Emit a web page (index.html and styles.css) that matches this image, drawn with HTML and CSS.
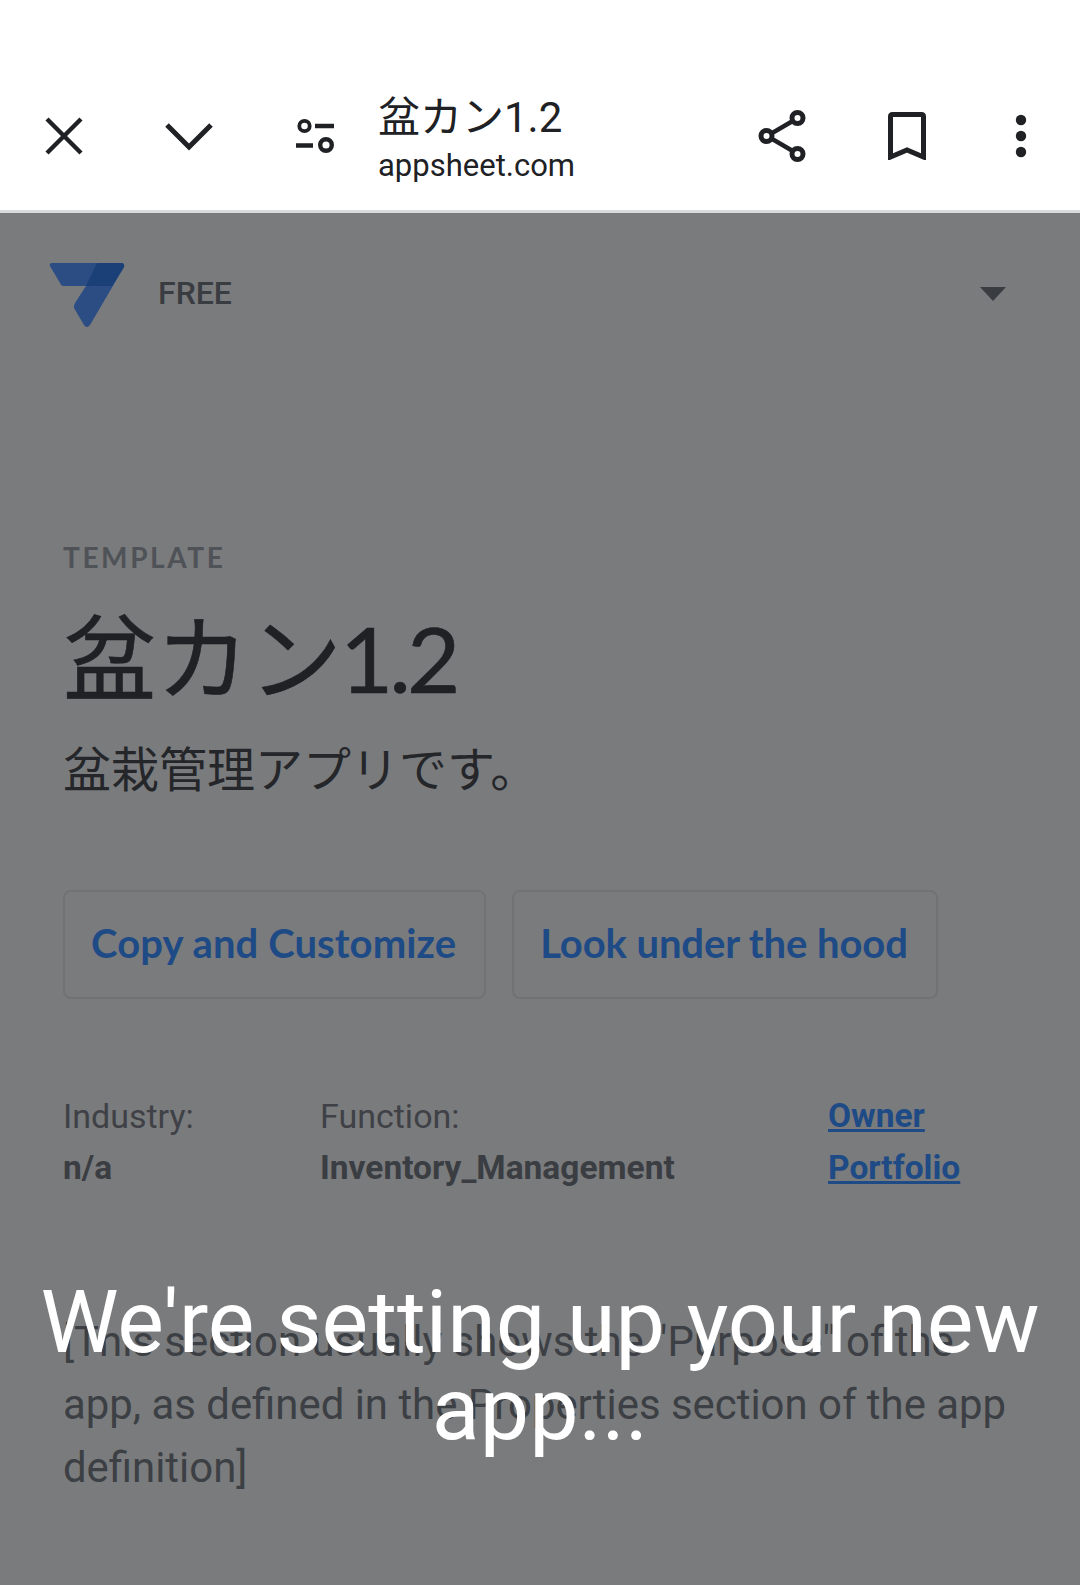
FILE: index.html
```html
<!DOCTYPE html>
<html lang="en">
<head>
  <meta charset="UTF-8">
  <meta name="viewport" content="width=device-width, initial-scale=1.0">
  <title>盆カン1.2</title>
  <link rel="stylesheet" href="styles.css">
</head>
<body>
  <header class="toolbar">
    <button class="tool tool-close" aria-label="Close">
      <svg width="40" height="40" viewBox="0 0 40 40"><path d="M3 3 L37 37 M37 3 L3 37" fill="none" stroke="#202124" stroke-width="4.4"/></svg>
    </button>
    <button class="tool tool-min" aria-label="Minimize">
      <svg width="48" height="32" viewBox="0 0 48 32"><path d="M2 5 L24 27 L46 5" fill="none" stroke="#202124" stroke-width="5"/></svg>
    </button>
    <button class="tool tool-site" aria-label="Site settings">
      <svg width="40" height="36" viewBox="0 0 40 36"><circle cx="9.500" cy="8" r="5.200" fill="none" stroke="#202124" stroke-width="3.800"/><path d="M20 8 H39 M1 27.500 H18" fill="none" stroke="#202124" stroke-width="4.400"/><circle cx="31" cy="27" r="5.800" fill="none" stroke="#202124" stroke-width="4.400"/></svg>
    </button>
    <div class="address">
      <div class="address-title">盆カン1.2</div>
      <div class="address-url">appsheet.com</div>
    </div>
    <button class="tool tool-share" aria-label="Share">
      <svg width="48" height="54" viewBox="0 0 48 54"><path d="M39 9.500 L9 27 L39 44.500" fill="none" stroke="#202124" stroke-width="4.400"/><circle cx="39.500" cy="9" r="5.500" fill="#fff" stroke="#202124" stroke-width="5"/><circle cx="8.500" cy="27" r="5.500" fill="#fff" stroke="#202124" stroke-width="5"/><circle cx="39.500" cy="45" r="5.500" fill="#fff" stroke="#202124" stroke-width="5"/></svg>
    </button>
    <button class="tool tool-bookmark" aria-label="Bookmark">
      <svg width="38" height="48" viewBox="0 0 38 48"><path d="M2.500 45 V4.500 Q2.500 2.500 4.500 2.500 H33.500 Q35.500 2.500 35.500 4.500 V45 L19 38 Z" fill="none" stroke="#202124" stroke-width="5"/></svg>
    </button>
    <button class="tool tool-more" aria-label="More">
      <svg width="12" height="44" viewBox="0 0 12 44"><circle cx="6" cy="6" r="5.200" fill="#202124"/><circle cx="6" cy="22" r="5.200" fill="#202124"/><circle cx="6" cy="38" r="5.200" fill="#202124"/></svg>
    </button>
  </header>

  <main class="page">
    <div class="app-bar">
      <svg class="logo" width="76" height="66" viewBox="0 1 76 66">
        <path d="M3 1 H72 Q76 1 75 5 L41 63 Q37.500 67 35 63 L25 46 Q24.500 44 26 41 L37 24 H14 Q12 24 11 21 L1 4 Q0 1 3 1 Z" fill="#2b4d84"/>
        <path d="M48 1 H72 Q76 1 75 5 L63 24 H37 Z" fill="#1b4078"/>
      </svg>
      <span class="plan">FREE</span>
      <span class="caret"></span>
    </div>

    <section class="intro">
      <div class="eyebrow">TEMPLATE</div>
      <h1 class="title">盆カン<span class="title-num">1.2</span></h1>
      <p class="subtitle">盆栽管理アプリです。</p>
      <div class="actions">
        <a class="action">Copy and Customize</a>
        <a class="action action-hood">Look under the hood</a>
      </div>
    </section>

    <section class="meta">
      <div class="meta-col meta-industry">
        <div>Industry:</div>
        <strong>n/a</strong>
      </div>
      <div class="meta-col meta-function">
        <div>Function:</div>
        <strong>Inventory_Management</strong>
      </div>
      <div class="meta-col meta-owner">
        <a>Owner</a>
        <a>Portfolio</a>
      </div>
    </section>

    <p class="purpose">[This section usually shows the "Purpose" of the app, as defined in the Properties section of the app definition]</p>

    <div class="setup-message">We're setting up your new app...</div>
  </main>
</body>
</html>
```

FILE: styles.css
```css
* {
  box-sizing: border-box;
}

html, body {
  margin: 0;
  height: 100%;
}

body {
  display: flex;
  flex-direction: column;
  font-family: Roboto, "Noto Sans CJK JP", sans-serif;
  background-color: #7a7b7d;
  overflow: hidden;
}

.toolbar {
  display: flex;
  align-items: center;
  height: 213px;
  padding-top: 62px;
  background-color: #fff;
  border-bottom: 3px solid #dadada;
  flex-shrink: 0;
}

.tool {
  display: flex;
  align-items: center;
  justify-content: center;
  padding: 0;
  border: none;
  background: none;
  flex-shrink: 0;
}

.tool-close {
  width: 40px;
  margin-left: 44px;
}

.tool-min {
  width: 48px;
  margin-left: 81px;
}

.tool-site {
  width: 40px;
  margin-left: 82px;
}

.address {
  margin-left: 43px;
  flex: 1;
  color: #202124;
}

.address-title {
  font-size: 42px;
  line-height: 50px;
  margin-top: 7px;
}

.address-url {
  font-size: 31px;
  line-height: 40px;
  margin-top: 3px;
}

.tool-share {
  width: 48px;
}

.tool-bookmark {
  width: 38px;
  margin-left: 82px;
}

.tool-more {
  width: 12px;
  margin-left: 89px;
  margin-right: 53px;
}

.page {
  position: relative;
  flex: 1;
}

.app-bar {
  display: flex;
  align-items: center;
  height: 66px;
  margin-top: 50px;
  padding-left: 49px;
  padding-right: 74px;
}

.plan {
  margin-left: 33px;
  margin-bottom: 6px;
  font-size: 32px;
  font-weight: 500;
  color: #393c41;
}

.caret {
  margin-left: auto;
  margin-bottom: 4px;
  border-left: 13.500px solid transparent;
  border-right: 13.500px solid transparent;
  border-top: 14px solid #393c41;
}

.intro {
  padding-left: 63px;
  margin-top: 210px;
}

.eyebrow {
  font-family: Lato, sans-serif;
  font-size: 28px;
  line-height: 36px;
  font-weight: 700;
  letter-spacing: 2.600px;
  color: #4f5257;
}

.title {
  margin: 30px 0 0;
  font-family: Lato, "Noto Sans CJK JP", sans-serif;
  font-size: 93px;
  line-height: 104px;
  font-weight: 400;
  -webkit-text-stroke: 0.6px #202124;
  color: #202124;
}

.title-num {
  font-size: 92px;
  letter-spacing: -4px;
  margin-left: -2px;
}

.subtitle {
  margin: 31px 0 0;
  font-size: 48px;
  line-height: 60px;
  color: #24262a;
}

.actions {
  display: flex;
  gap: 26px;
  margin-top: 89px;
}

.action {
  display: block;
  height: 109px;
  padding: 0 28px 0 26px;
  border: 2px solid #717274;
  border-radius: 8px;
  font-family: Lato, sans-serif;
  font-size: 40px;
  line-height: 102px;
  font-weight: 700;
  letter-spacing: 0.100px;
  color: #1e4a85;
}

.action-hood {
  letter-spacing: -0.100px;
}

.meta {
  display: flex;
  padding-left: 63px;
  margin-top: 91px;
  font-size: 34px;
  line-height: 52px;
  color: #3f4146;
}

.meta-col strong {
  display: block;
  font-size: 33.500px;
  font-weight: 700;
  color: #3a3d42;
}

.meta-industry {
  width: 257px;
}

.meta-function {
  width: 508px;
}

.meta-owner a {
  display: block;
  font-size: 33.500px;
  font-weight: 700;
  color: #1e4a85;
  text-decoration: underline;
}

.purpose {
  margin: 116px 0 0;
  padding: 0 63px;
  font-size: 41.900px;
  line-height: 63px;
  color: #3c3f44;
}

.setup-message {
  position: absolute;
  left: 0;
  right: 0;
  top: 1065px;
  padding: 0 30px;
  text-align: center;
  font-size: 88px;
  line-height: 87px;
  color: #fff;
}
```
